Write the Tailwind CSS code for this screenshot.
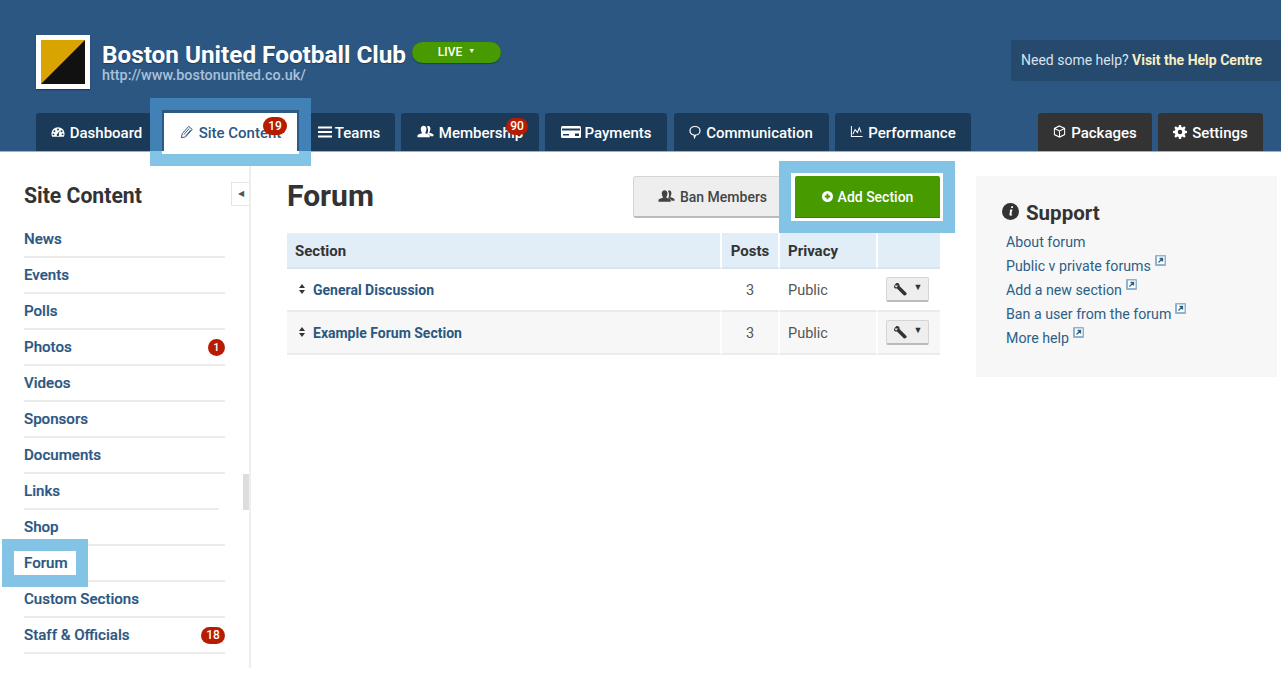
<!DOCTYPE html>
<html lang="en">
<head>
    <meta charset="UTF-8">
    <meta name="viewport" content="width=device-width, initial-scale=1.0">
    <title>Forum</title>
    <script src="https://cdn.jsdelivr.net/npm/@tailwindcss/browser@4"></script>
</head>
<body class="relative h-[675px] overflow-hidden bg-white font-['Roboto',sans-serif] text-[#333]">

    <!-- header -->
    <header class="h-[152px] bg-[#2b5782] border-b border-[#9fb0c2] flex flex-col">
        <div class="h-[113px] flex justify-between">
            <div class="pl-[36px] pt-[35px] flex items-start">
                <div class="w-[54px] h-[54px] bg-white p-[5px] shadow-[0_1px_1px_rgba(0,0,0,0.3)]">
                    <svg viewBox="0 0 44 44" class="w-[44px] h-[44px] block"><rect width="44" height="44" fill="#d9a300"/><path d="M44 0V44H0Z" fill="#111"/></svg>
                </div>
                <div class="ml-[12px] pt-[5px]">
                    <div class="flex items-center">
                        <h1 class="text-[24.300px] leading-[29px] font-bold text-white [text-shadow:0_1px_1px_rgba(0,0,0,0.3)]">Boston United Football Club</h1>
                        <span class="ml-[6px] -mt-[5px] w-[89px] h-[21px] rounded-full bg-[#479a00] text-white text-[12px] font-medium flex items-center justify-center gap-[6px] shadow-[0_1px_1px_rgba(0,0,0,0.3)]">LIVE <span class="text-[7px] leading-none pb-[2px]">▼</span></span>
                    </div>
                    <div class="text-[14.400px] leading-[14px] font-medium text-[#a9c1d9]">http://www.bostonunited.co.uk/</div>
                </div>
            </div>
            <div class="mt-[40px] w-[270px] h-[41px] bg-[#254a6e] pl-[10px] flex items-center text-[14px] text-[#d9e2ea]">
                Need some help?&nbsp;<a class="font-bold text-[#f7eec4]">Visit the Help Centre</a>
            </div>
        </div>
        <nav class="flex justify-between pl-[36px] pr-[18px] h-[38px] text-[15px] font-medium text-white">
            <div class="flex">
                <a class="w-[121px] pt-[2px] bg-[#1b3a58] rounded-t-[3px] flex items-center justify-center gap-[5px]">
                    <svg viewBox="0 0 16 16" class="w-[14px] h-[14px] -mt-[3px]" fill="#fff"><path fill-rule="evenodd" d="M8 2.5a7.5 7.5 0 0 0-7.5 7.500c0 1.300.3 2.300.9 3.300h13.200c.6-1 .9-2 .9-3.300A7.500 7.500 0 0 0 8 2.500ZM8 4a1.100 1.100 0 1 1 0 2.200A1.100 1.100 0 0 1 8 4ZM3.900 6a1.100 1.100 0 1 1 0 2.200 1.100 1.100 0 0 1 0-2.200Zm8.200 0a1.100 1.100 0 1 1 0 2.200 1.100 1.100 0 0 1 0-2.200ZM2.800 9.600a1.100 1.100 0 1 1 0 2.200 1.100 1.100 0 0 1 0-2.200Zm10.400 0a1.100 1.100 0 1 1 0 2.200 1.100 1.100 0 0 1 0-2.200ZM10 6.500 8.900 10.300a1.400 1.400 0 1 1-1.500-.3Z"/></svg>
                    Dashboard
                </a>
                <a class="relative ml-[7px] pt-[2px] w-[133px] h-[39px] bg-white text-[#2b5782] flex items-center justify-center gap-[5px] z-10">
                    <svg viewBox="0 0 16 16" class="w-[14px] h-[14px] -mt-[3px]" fill="none" stroke="#2b5782" stroke-width="1.100"><path d="M1.500 14.500l1-4.500 7.500-8.500 4 3.500-7.500 8.500ZM4.500 11l6-7M6.500 12.500l6-7"/></svg>
                    Site Content
                    <span class="absolute left-[99px] top-[4px] w-[24px] h-[18px] rounded-full bg-[#b71c00] text-white text-[12px] leading-[18px] text-center">19</span>
                </a>
                <a class="ml-[6px] pt-[2px] w-[92px] bg-[#1b3a58] rounded-t-[3px] flex items-center justify-center gap-[3px]">
                    <svg viewBox="0 0 14 14" class="w-[14px] h-[14px] -mt-[3px]" fill="#fff"><rect y="1.500" width="14" height="2"/><rect y="6" width="14" height="2"/><rect y="10.500" width="14" height="2"/></svg>
                    Teams
                </a>
                <a class="relative ml-[6px] pt-[2px] w-[138px] bg-[#1b3a58] rounded-t-[3px] flex items-center justify-center gap-[5px]">
                    <svg viewBox="0 0 18 14" class="w-[17px] h-[15px] -mt-[3px]" fill="#fff"><path d="M7 1c1.900 0 3 1.400 3 3.300S8.900 8 8.700 8.500c0 .6 4.300 1 4.800 2.600V13H.5v-1.900C1 9.500 5.300 9.100 5.300 8.500 5.100 8 4 6.200 4 4.300S5.100 1 7 1Z"/><path d="M11.500 1c1.600 0 2.700 1.300 2.700 3s-1 3.500-1.300 4c0 .5 4.100.9 4.600 2.400V12h-3c-.3-1.600-3-2.300-3.800-2.800.9-1.200 1.200-3 .9-4.700-.1-1-.5-1.800-1-2.400.4-.7.9-1.100 1.900-1.100Z"/></svg>
                    Membership
                    <span class="absolute left-[105px] top-[5px] w-[22px] h-[17px] rounded-full bg-[#b71c00] text-white text-[12px] leading-[17px] text-center">90</span>
                </a>
                <a class="ml-[6px] pt-[2px] w-[122px] bg-[#1b3a58] rounded-t-[3px] flex items-center justify-center gap-[4px]">
                    <svg viewBox="0 0 20 14" class="w-[20px] h-[14px] -mt-[3px]"><rect y="1" width="20" height="12" rx="1.500" fill="#fff"/><rect x="1" y="3.500" width="18" height="2" fill="#1b3a58"/><rect x="2" y="9" width="6" height="1.500" fill="#1b3a58"/><rect x="14" y="8.500" width="4" height="2.500" fill="#1b3a58"/></svg>
                    Payments
                </a>
                <a class="ml-[7px] pt-[2px] pr-[2px] w-[155px] bg-[#1b3a58] rounded-t-[3px] flex items-center justify-center gap-[4px]">
                    <svg viewBox="0 0 14 14" class="w-[14px] h-[14px] -mt-[3px]" fill="none" stroke="#fff" stroke-width="1.200"><path d="M7 1.500c3 0 5 2 5 4.300 0 2.300-2 4.200-4.400 4.200L6.500 12.500 6 10C3.800 9.700 2 8 2 5.800 2 3.500 4 1.500 7 1.500Z"/></svg>
                    Communication
                </a>
                <a class="ml-[6px] pt-[2px] w-[136px] bg-[#1b3a58] rounded-t-[3px] flex items-center justify-center gap-[5px]">
                    <svg viewBox="0 0 14 14" class="w-[13px] h-[13px] -mt-[3px]" fill="none" stroke="#fff" stroke-width="1.100"><path d="M1.500 1v11.500H13.500M3 10l2.500-5 2.500 3 2-5 2 5"/></svg>
                    Performance
                </a>
            </div>
            <div class="flex">
                <a class="w-[114px] pt-[2px] bg-[#333] rounded-t-[3px] flex items-center justify-center gap-[5px]">
                    <svg viewBox="0 0 14 14" class="w-[13px] h-[13px] -mt-[3px]" fill="none" stroke="#fff" stroke-width="1.100"><path d="M7 1l5.500 2.700v6.600L7 13l-5.500-2.700V3.700ZM1.500 3.700 7 6.500l5.500-2.800M7 6.500V13"/></svg>
                    Packages
                </a>
                <a class="ml-[6px] pt-[2px] w-[105px] bg-[#333] rounded-t-[3px] flex items-center justify-center gap-[5px]">
                    <svg viewBox="0 0 16 16" class="w-[14px] h-[14px] -mt-[3px]" fill="#fff"><path fill-rule="evenodd" d="M6.800 0h2.400l.4 2.200 1.300.6 1.900-1.300 1.700 1.700-1.300 1.900.6 1.300 2.200.4v2.400l-2.200.4-.6 1.300 1.300 1.900-1.700 1.700-1.900-1.300-1.300.6-.4 2.200H6.800l-.4-2.200-1.300-.6-1.900 1.300-1.700-1.700 1.300-1.900-.6-1.300L0 9.200V6.800l2.200-.4.6-1.300-1.300-1.900 1.700-1.700 1.900 1.300 1.300-.6ZM8 5.400a2.600 2.600 0 1 0 0 5.200 2.600 2.600 0 0 0 0-5.200Z"/></svg>
                    Settings
                </a>
            </div>
        </nav>
    </header>

    <div class="flex items-start">
        <!-- sidebar -->
        <aside class="relative w-[251px] h-[516px] border-r-2 border-[#eeeeee] pl-[24px] pr-[24px] shrink-0">
            <h2 class="pt-[31px] text-[21.200px] leading-[26px] font-bold text-[#333]">Site Content</h2>
            <button class="absolute right-0 top-[30px] w-[18px] h-[24px] bg-white border border-[#e5e5e5] border-r-0 flex items-center justify-center text-[8px] text-[#555]">◀</button>
            <ul class="mt-[13px] text-[15.100px] font-medium text-[#2b5782] [-webkit-text-stroke:0.2px_#2b5782]">
                <li class="h-[36px] border-b-2 border-[#ebebeb] flex items-center justify-between">News</li>
                <li class="h-[36px] border-b-2 border-[#ebebeb] flex items-center justify-between">Events</li>
                <li class="h-[36px] border-b-2 border-[#ebebeb] flex items-center justify-between">Polls</li>
                <li class="h-[36px] border-b-2 border-[#ebebeb] flex items-center justify-between">Photos <span class="w-[17px] h-[17px] rounded-full bg-[#b71c00] text-white text-[11px] leading-[17px] text-center [-webkit-text-stroke:0]">1</span></li>
                <li class="h-[36px] border-b-2 border-[#ebebeb] flex items-center justify-between">Videos</li>
                <li class="h-[36px] border-b-2 border-[#ebebeb] flex items-center justify-between">Sponsors</li>
                <li class="h-[36px] border-b-2 border-[#ebebeb] flex items-center justify-between">Documents</li>
                <li class="h-[36px] w-[195px] border-b-2 border-[#ebebeb] flex items-center justify-between">Links</li>
                <li class="h-[36px] border-b-2 border-[#ebebeb] flex items-center justify-between">Shop</li>
                <li class="h-[36px] border-b-2 border-[#ebebeb] flex items-center justify-between">Forum</li>
                <li class="h-[36px] border-b-2 border-[#ebebeb] flex items-center justify-between">Custom Sections</li>
                <li class="h-[36px] border-b-2 border-[#ebebeb] flex items-center justify-between">Staff &amp; Officials <span class="w-[24px] h-[17px] rounded-full bg-[#b71c00] text-white text-[12px] leading-[17px] text-center [-webkit-text-stroke:0]">18</span></li>
            </ul>
            <div class="absolute right-0 top-[322px] w-[6px] h-[36px] bg-[#dddddd]"></div>
        </aside>

        <!-- main -->
        <main class="ml-[36px] w-[653px] shrink-0">
            <div class="h-[81px] flex justify-between items-start pt-[24px]">
                <h2 class="text-[30px] leading-[40px] font-bold text-[#333]">Forum</h2>
                <div class="flex gap-[3px]">
                    <button class="w-[159px] h-[42px] pt-[1px] bg-[#eeeeee] border border-[#d5d5d5] border-b-2 border-b-[#bbbbbb] rounded-[3px] text-[14px] font-medium text-[#444] flex items-center justify-center gap-[5px]">
                        <svg viewBox="0 0 18 14" class="w-[17px] h-[14px] -mt-[2px]" fill="#444"><path d="M7 1c1.900 0 3 1.400 3 3.300S8.900 8 8.700 8.500c0 .6 4.300 1 4.800 2.600V13H.5v-1.900C1 9.500 5.300 9.100 5.300 8.500 5.100 8 4 6.200 4 4.300S5.100 1 7 1Z"/><path d="M11.500 1c1.600 0 2.700 1.300 2.700 3s-1 3.500-1.300 4c0 .5 4.100.9 4.600 2.400V12h-3c-.3-1.600-3-2.300-3.800-2.800.9-1.200 1.200-3 .9-4.700-.1-1-.5-1.800-1-2.400.4-.7.9-1.100 1.900-1.100Z"/></svg>
                        Ban Members
                    </button>
                    <button class="relative z-10 w-[145px] h-[43px] pt-[1px] bg-[#479a00] border-b-2 border-[#3a7f00] rounded-[2px] text-[14px] font-medium text-white flex items-center justify-center gap-[5px]">
                        <svg viewBox="0 0 12 12" class="w-[11px] h-[11px] -mt-[2px]"><circle cx="6" cy="6" r="6" fill="#fff"/><path d="M6 3v6M3 6h6" stroke="#479a00" stroke-width="2"/></svg>
                        Add Section
                    </button>
                </div>
            </div>
            <table class="w-[653px] table-fixed border-separate border-spacing-0 text-[14.500px]">
                <thead>
                    <tr class="h-[36px] text-[15px] text-[#333]">
                        <th class="w-[435px] bg-[#e1edf7] border-r-2 border-b-2 border-r-white border-b-[#d8e4ee] text-left font-bold pl-[8px] pt-[2px]">Section</th>
                        <th class="w-[58px] bg-[#e1edf7] border-r-2 border-b-2 border-r-white border-b-[#d8e4ee] text-center font-bold pt-[2px]">Posts</th>
                        <th class="w-[98px] bg-[#e1edf7] border-r-2 border-b-2 border-r-white border-b-[#d8e4ee] text-left font-bold pl-[8px] pt-[2px]">Privacy</th>
                        <th class="bg-[#e1edf7] border-b-2 border-[#d8e4ee]"></th>
                    </tr>
                </thead>
                <tbody class="text-[#555]">
                    <tr class="h-[43px]">
                        <td class="border-r-2 border-b-2 border-r-white border-b-[#ebebeb] pl-[12px] pt-[2px]">
                            <div class="flex items-center gap-[8px] text-[14px] font-bold text-[#2b5782]">
                                <span class="flex flex-col gap-[2px] pb-[3px]"><svg viewBox="0 0 6 4" class="w-[6px] h-[4px]" fill="#333"><path d="M3 0l3 4H0Z"/></svg><svg viewBox="0 0 6 4" class="w-[6px] h-[4px]" fill="#333"><path d="M3 4L0 0h6Z"/></svg></span>
                                General Discussion
                            </div>
                        </td>
                        <td class="border-r-2 border-b-2 border-r-white border-b-[#ebebeb] text-center pt-[2px]">3</td>
                        <td class="border-r-2 border-b-2 border-r-white border-b-[#ebebeb] pl-[8px] pt-[2px]">Public</td>
                        <td class="border-b-2 border-[#ebebeb] pl-[8px]">
                            <button class="w-[43px] h-[25px] bg-[#eeeeee] border border-[#d5d5d5] border-b-2 border-b-[#bbbbbb] rounded-[2px] flex items-center justify-center gap-[7px]">
                                <svg viewBox="0 0 14 14" class="w-[14px] h-[14px]" fill="#333"><path d="M1 3.500 3.500 1C5.500.5 7 2 6.500 4l7 7c.6.700-.2 2.800-2.500 2.500l-7-7C2 7 .5 5.500 1 3.500l2.200 2 2-2Z"/></svg>
                                <span class="text-[9px] leading-none text-[#333] pb-[3px]">▼</span>
                            </button>
                        </td>
                    </tr>
                    <tr class="h-[43px]">
                        <td class="bg-[#f7f7f7] border-r-2 border-b-2 border-r-white border-b-[#ebebeb] pl-[12px] pt-[2px]">
                            <div class="flex items-center gap-[8px] text-[14px] font-bold text-[#2b5782]">
                                <span class="flex flex-col gap-[2px] pb-[3px]"><svg viewBox="0 0 6 4" class="w-[6px] h-[4px]" fill="#333"><path d="M3 0l3 4H0Z"/></svg><svg viewBox="0 0 6 4" class="w-[6px] h-[4px]" fill="#333"><path d="M3 4L0 0h6Z"/></svg></span>
                                Example Forum Section
                            </div>
                        </td>
                        <td class="bg-[#f7f7f7] border-r-2 border-b-2 border-r-white border-b-[#ebebeb] text-center pt-[2px]">3</td>
                        <td class="bg-[#f7f7f7] border-r-2 border-b-2 border-r-white border-b-[#ebebeb] pl-[8px] pt-[2px]">Public</td>
                        <td class="bg-[#f7f7f7] border-b-2 border-[#ebebeb] pl-[8px]">
                            <button class="w-[43px] h-[25px] bg-[#eeeeee] border border-[#d5d5d5] border-b-2 border-b-[#bbbbbb] rounded-[2px] flex items-center justify-center gap-[7px]">
                                <svg viewBox="0 0 14 14" class="w-[14px] h-[14px]" fill="#333"><path d="M1 3.500 3.500 1C5.500.5 7 2 6.500 4l7 7c.6.700-.2 2.800-2.500 2.500l-7-7C2 7 .5 5.500 1 3.500l2.200 2 2-2Z"/></svg>
                                <span class="text-[9px] leading-none text-[#333] pb-[3px]">▼</span>
                            </button>
                        </td>
                    </tr>
                </tbody>
            </table>
        </main>

        <!-- support -->
        <aside class="ml-[36px] mt-[24px] w-[301px] h-[201px] bg-[#f7f7f7] pl-[26px] pt-[23px] shrink-0">
            <div class="flex items-center gap-[7px]">
                <svg viewBox="0 0 16 16" class="w-[17px] h-[17px] -mt-[3px]"><circle cx="8" cy="8" r="8" fill="#333"/><path d="M8.800 3h1.700l-.3 1.700H8.500ZM8 6h1.800l-1 4.500c-.1.500.3.500.9.200l-.1.800c-1.200.7-2.900.6-2.600-.9l.7-3.500-.8-.1Z" fill="#fff"/></svg>
                <h3 class="text-[20.500px] leading-[28px] font-bold text-[#333]">Support</h3>
            </div>
            <ul class="mt-[3px] ml-[4px] text-[14.200px] leading-[24px] text-[#2d6086]">
                <li>About forum</li>
                <li class="flex items-start">Public v private forums<svg viewBox="0 0 11 11" class="w-[11px] h-[11px] ml-[4px] mt-[1px]"><rect width="11" height="11" rx="1" fill="#8fb2cf"/><rect x="2" y="1.500" width="7.500" height="7.500" fill="#fff"/><path d="M3.500 7.500 7 4M4.500 3.500h3v3" stroke="#2d6086" stroke-width="1.300" fill="none"/></svg></li>
                <li class="flex items-start">Add a new section<svg viewBox="0 0 11 11" class="w-[11px] h-[11px] ml-[4px] mt-[1px]"><rect width="11" height="11" rx="1" fill="#8fb2cf"/><rect x="2" y="1.500" width="7.500" height="7.500" fill="#fff"/><path d="M3.500 7.500 7 4M4.500 3.500h3v3" stroke="#2d6086" stroke-width="1.300" fill="none"/></svg></li>
                <li class="flex items-start">Ban a user from the forum<svg viewBox="0 0 11 11" class="w-[11px] h-[11px] ml-[4px] mt-[1px]"><rect width="11" height="11" rx="1" fill="#8fb2cf"/><rect x="2" y="1.500" width="7.500" height="7.500" fill="#fff"/><path d="M3.500 7.500 7 4M4.500 3.500h3v3" stroke="#2d6086" stroke-width="1.300" fill="none"/></svg></li>
                <li class="flex items-start">More help<svg viewBox="0 0 11 11" class="w-[11px] h-[11px] ml-[4px] mt-[1px]"><rect width="11" height="11" rx="1" fill="#8fb2cf"/><rect x="2" y="1.500" width="7.500" height="7.500" fill="#fff"/><path d="M3.500 7.500 7 4M4.500 3.500h3v3" stroke="#2d6086" stroke-width="1.300" fill="none"/></svg></li>
            </ul>
        </aside>
    </div>

    <!-- callout highlights that sit over the page -->
    <div class="absolute left-[150px] top-[98px] w-[161px] h-[53px] border-[12px] border-b-0 border-[#4181b5] z-20"></div>
    <div class="absolute left-[162px] top-[111px] w-[137px] h-[40px] border-[2px] border-b-0 border-[#2a5a85] z-20"></div>
    <div class="absolute left-[150px] top-[151px] w-[161px] h-[15px] border-[12px] border-t-0 border-[#82c3e6] z-20"></div>
    <div class="absolute left-[162px] top-[151px] w-[137px] h-[3px] bg-white z-20"></div>
    <div class="absolute left-[779px] top-[161px] w-[176px] h-[72px] border-[12px] border-[#82c3e6] z-20"></div>
    <div class="absolute left-[791px] top-[173px] w-[152px] h-[48px] border-[3px] border-white z-20"></div>
    <div class="absolute left-[2px] top-[539px] w-[86px] h-[48px] border-[12px] border-[#82c3e6] z-20"></div>

</body>
</html>
